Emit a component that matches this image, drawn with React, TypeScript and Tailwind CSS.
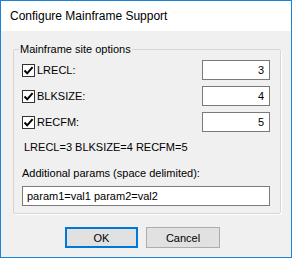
import { useState } from "react";

type Field = { key: string; label: string; value: string };

const fields: Field[] = [
  { key: "lrecl", label: "LRECL:", value: "3" },
  { key: "blksize", label: "BLKSIZE:", value: "4" },
  { key: "recfm", label: "RECFM:", value: "5" },
];

function CheckBox({ checked, onToggle }: { checked: boolean; onToggle: () => void }) {
  return (
    <button
      type="button"
      onClick={onToggle}
      className="flex h-[13px] w-[13px] shrink-0 items-center justify-center border border-[#333333] bg-white"
      aria-pressed={checked}
    >
      {checked && (
        <svg viewBox="0 0 11 11" className="h-[11px] w-[11px]" aria-hidden="true">
          <path d="M1.5 5.5 L4.2 8.3 L9.6 2.2" fill="none" stroke="#000" strokeWidth="2" />
        </svg>
      )}
    </button>
  );
}

export default function App() {
  const [checked, setChecked] = useState<Record<string, boolean>>({ lrecl: true, blksize: true, recfm: true });
  const [values, setValues] = useState<Record<string, string>>({ lrecl: "3", blksize: "4", recfm: "5" });
  const [params, setParams] = useState("param1=val1 param2=val2");

  const summary = fields
    .filter((f) => checked[f.key])
    .map((f) => `${f.label.replace(":", "")}=${values[f.key]}`)
    .join(" ");

  return (
    <div className="flex h-[258px] w-[292px] flex-col border border-[#1883d7] bg-[#f0f0f0] font-['Liberation_Sans',Arial,sans-serif] text-[11px] leading-[14px] text-black">
      {/* Title bar */}
      <div className="flex h-[30px] shrink-0 items-center bg-white pl-[9px] text-[12px]">
        Configure Mainframe Support
      </div>

      {/* Group box */}
      <fieldset className="ml-[12px] mt-[11px] w-[268px] rounded-[2px] border border-[#d5d5d5] pb-[7px] pl-[8px] pr-[10px] shadow-[1px_1px_0_#ffffff]">
        <legend className="-ml-[3px] px-[1px]">Mainframe site options</legend>

        <div className="mt-[4px] flex flex-col gap-[6px]">
          {fields.map((f) => (
            <div key={f.key} className="flex h-[20px] items-center">
              <CheckBox
                checked={checked[f.key]}
                onToggle={() => setChecked((c) => ({ ...c, [f.key]: !c[f.key] }))}
              />
              <span className="ml-[2px]">{f.label}</span>
              <input
                value={values[f.key]}
                onChange={(e) => setValues((v) => ({ ...v, [f.key]: e.target.value }))}
                className="ml-auto h-[20px] w-[68px] border border-[#7a7a7a] bg-white pr-[5px] text-right outline-none"
              />
            </div>
          ))}
        </div>

        <div className="ml-[2px] mt-[8px]">{summary}</div>

        <div className="mt-[12px]">Additional params (space delimited):</div>
        <input
          value={params}
          onChange={(e) => setParams(e.target.value)}
          className="mt-[6px] h-[20px] w-[248px] border border-[#7a7a7a] bg-white pl-[4px] outline-none"
        />
      </fieldset>

      {/* Buttons */}
      <div className="ml-[64px] mt-[13px] flex gap-[8px]">
        <button type="button" className="h-[21px] w-[73px] border-2 border-[#0078d7] bg-[#e1e1e1]">
          OK
        </button>
        <button type="button" className="h-[21px] w-[74px] border border-[#adadad] bg-[#e1e1e1]">
          Cancel
        </button>
      </div>
    </div>
  );
}
